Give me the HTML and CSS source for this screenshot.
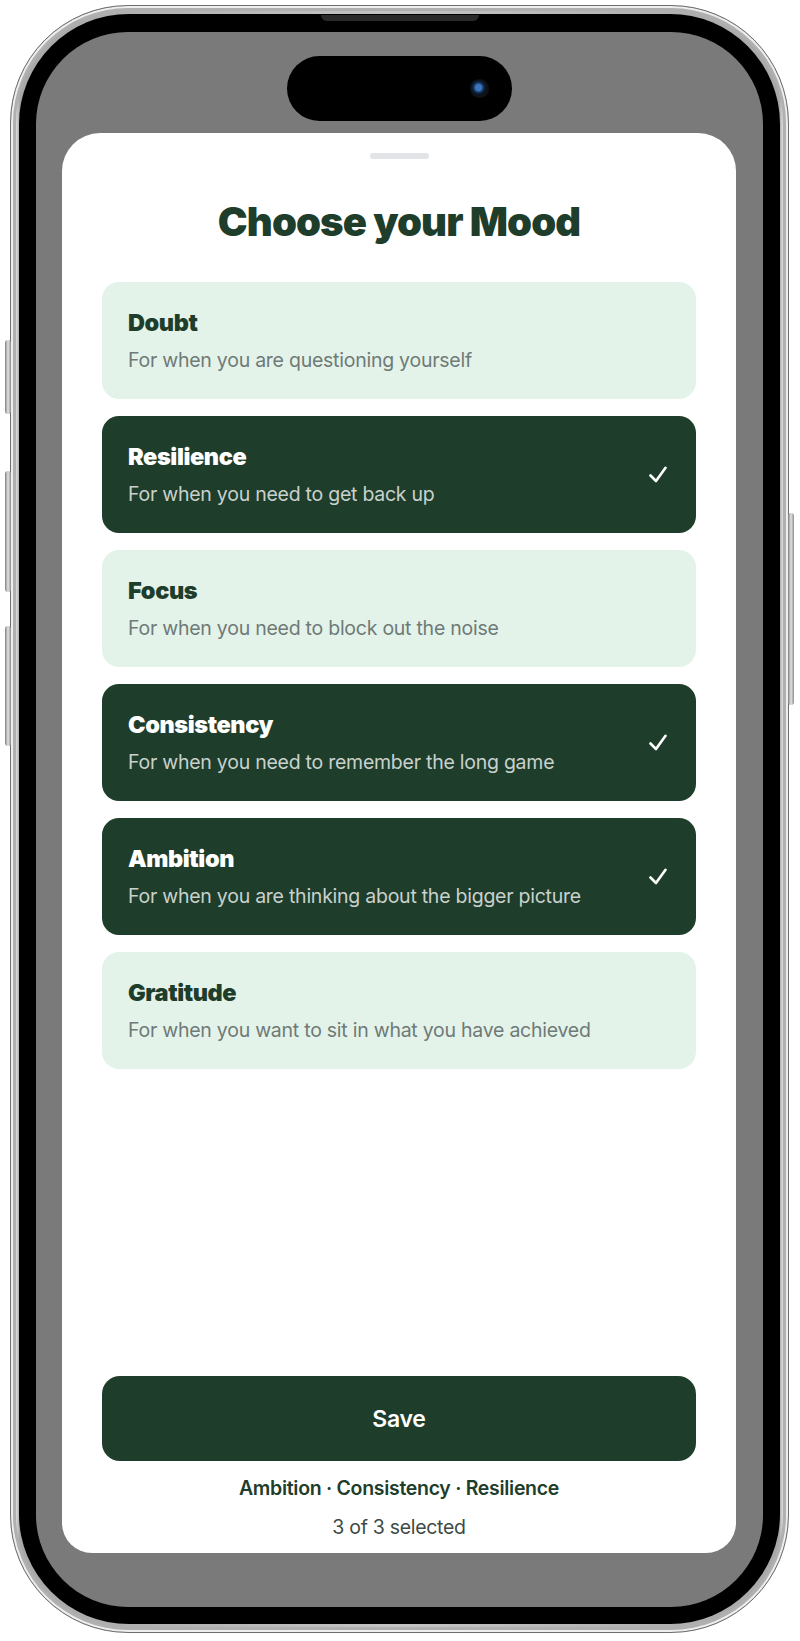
FILE: index.html
```html
<!DOCTYPE html>
<html lang="en">
<head>
<meta charset="utf-8">
<title>Choose your Mood</title>
<link rel="stylesheet" href="styles.css">
</head>
<body>
<div class="phone">
  <span class="btn btn-l1"></span>
  <span class="btn btn-l2"></span>
  <span class="btn btn-l3"></span>
  <span class="btn btn-r1"></span>
  <span class="speaker"></span>
  <div class="bezel">
    <div class="screen">
      <div class="island"><span class="cam"></span></div>
      <div class="sheet">
        <div class="handle"></div>
        <h1 class="title">Choose your Mood</h1>
        <div class="list">
          <div class="card">
            <div class="card-text">
              <div class="card-title">Doubt</div>
              <div class="card-sub">For when you are questioning yourself</div>
            </div>
          </div>
          <div class="card selected">
            <div class="card-text">
              <div class="card-title">Resilience</div>
              <div class="card-sub">For when you need to get back up</div>
            </div>
            <svg class="check" width="18" height="17" viewBox="0 0 18 17"><polyline points="1.5,9.5 7,15 16.5,1.8" fill="none" stroke="#fff" stroke-width="2.6" stroke-linecap="round" stroke-linejoin="round"/></svg>
          </div>
          <div class="card">
            <div class="card-text">
              <div class="card-title">Focus</div>
              <div class="card-sub">For when you need to block out the noise</div>
            </div>
          </div>
          <div class="card selected">
            <div class="card-text">
              <div class="card-title">Consistency</div>
              <div class="card-sub">For when you need to remember the long game</div>
            </div>
            <svg class="check" width="18" height="17" viewBox="0 0 18 17"><polyline points="1.5,9.5 7,15 16.5,1.8" fill="none" stroke="#fff" stroke-width="2.6" stroke-linecap="round" stroke-linejoin="round"/></svg>
          </div>
          <div class="card selected">
            <div class="card-text">
              <div class="card-title">Ambition</div>
              <div class="card-sub">For when you are thinking about the bigger picture</div>
            </div>
            <svg class="check" width="18" height="17" viewBox="0 0 18 17"><polyline points="1.5,9.5 7,15 16.5,1.8" fill="none" stroke="#fff" stroke-width="2.6" stroke-linecap="round" stroke-linejoin="round"/></svg>
          </div>
          <div class="card">
            <div class="card-text">
              <div class="card-title">Gratitude</div>
              <div class="card-sub">For when you want to sit in what you have achieved</div>
            </div>
          </div>
        </div>
        <div class="spacer"></div>
        <button class="save">Save</button>
        <div class="summary">Ambition · Consistency · Resilience</div>
        <div class="count">3 of 3 selected</div>
      </div>
    </div>
  </div>
</div>
</body>
</html>
```

FILE: styles.css
```css
* { box-sizing: border-box; }
html, body { margin: 0; padding: 0; background: #fff; }
body { width: 800px; height: 1641px; font-family: "Inter", "Liberation Sans", sans-serif; }

.phone {
  position: relative;
  margin: 5px 0 0 10px;
  width: 779px;
  height: 1628px;
  border-radius: 118px;
  padding: 8px;
  background: linear-gradient(90deg, #8a8a8a 0%, #e2e2e2 0.6%, #a8a8a8 1.1%, #c4c4c4 50%, #a8a8a8 98.9%, #e2e2e2 99.4%, #8a8a8a 100%);
  border: 1px solid #6e6e6e;
  box-shadow: inset 0 0 0 2px #eeeeee, inset 0 0 0 5px #b0b0b0;
}
.btn { position: absolute; width: 6px; background: linear-gradient(90deg, #7d7d7d, #e4e4e4, #8d8d8d); border-radius: 3px; }
.btn-l1 { left: -6px; top: 334px; height: 74px; }
.btn-l2 { left: -6px; top: 465px; height: 121px; }
.btn-l3 { left: -6px; top: 620px; height: 120px; }
.btn-r1 { right: -6px; top: 507px; height: 192px; }
.speaker { position: absolute; left: 310px; top: 9px; width: 158px; height: 6px; background: #2a2a2a; border-radius: 0 0 6px 6px; }

.bezel {
  height: 100%;
  background: #000;
  border-radius: 110px;
  padding: 18px 17px 17px 17px;
}
.screen {
  height: 100%;
  background: #7a7a7a;
  border-radius: 92px;
  display: flex;
  flex-direction: column;
  align-items: center;
  padding: 24px 27px 54px 26px;
}
.island {
  width: 225px;
  height: 65px;
  border-radius: 33px;
  background: #000;
  position: relative;
  flex: none;
}
.cam {
  position: absolute;
  left: 183px;
  top: 23px;
  width: 19px;
  height: 19px;
  border-radius: 50%;
  background: radial-gradient(circle at 45% 45%, #3b74b8 0 3px, #12315a 5px, #0a1424 7px, #111 9.5px);
}
.sheet {
  margin-top: 12px;
  width: 100%;
  flex: 1;
  background: #fff;
  border-radius: 38px 38px 30px 30px;
  display: flex;
  flex-direction: column;
  align-items: center;
  padding: 20px 40px 14px 40px;
}
.handle { width: 59px; height: 6px; border-radius: 3px; background: #e3e4e8; flex: none; }
.title {
  margin: 40px 0 0 0;
  font-family: "Inter", sans-serif;
  font-weight: 900;
  font-size: 40px;
  line-height: 46px;
  letter-spacing: -0.9px;
  color: #1e3d2b;
}
.list { width: 100%; margin-top: 37px; display: flex; flex-direction: column; gap: 17px; }
.card {
  height: 117px;
  border-radius: 17px;
  background: #e3f3ea;
  display: flex;
  align-items: center;
  padding: 0 29px 0 26px;
}
.card-text { flex: 1; display: flex; flex-direction: column; gap: 11px; }
.card-title { font-weight: 900; font-size: 23.5px; line-height: 28px; letter-spacing: -0.4px; color: #1e3d2b; }
.card-sub { font-weight: 400; font-size: 19.5px; line-height: 25px; color: #6f7a77; letter-spacing: -0.25px; }
.card.selected { background: #1e3d2b; }
.card.selected .card-title { color: #fff; }
.card.selected .card-sub { color: #c9d1cd; }
.check { flex: none; display: block; }
.spacer { flex: 1; }
.save {
  width: 100%;
  height: 85px;
  border: none;
  border-radius: 18px;
  background: #1e3d2b;
  color: #fff;
  font-family: "Inter", sans-serif;
  font-weight: 600;
  font-size: 23px;
  letter-spacing: -0.3px;
  flex: none;
}
.summary { margin-top: 15px; font-weight: 600; font-size: 19.5px; line-height: 24px; letter-spacing: -0.3px; color: #1e3d2b; }
.count { margin-top: 15px; font-weight: 400; font-size: 19.5px; line-height: 24px; letter-spacing: -0.3px; color: #3e4a45; }
```
